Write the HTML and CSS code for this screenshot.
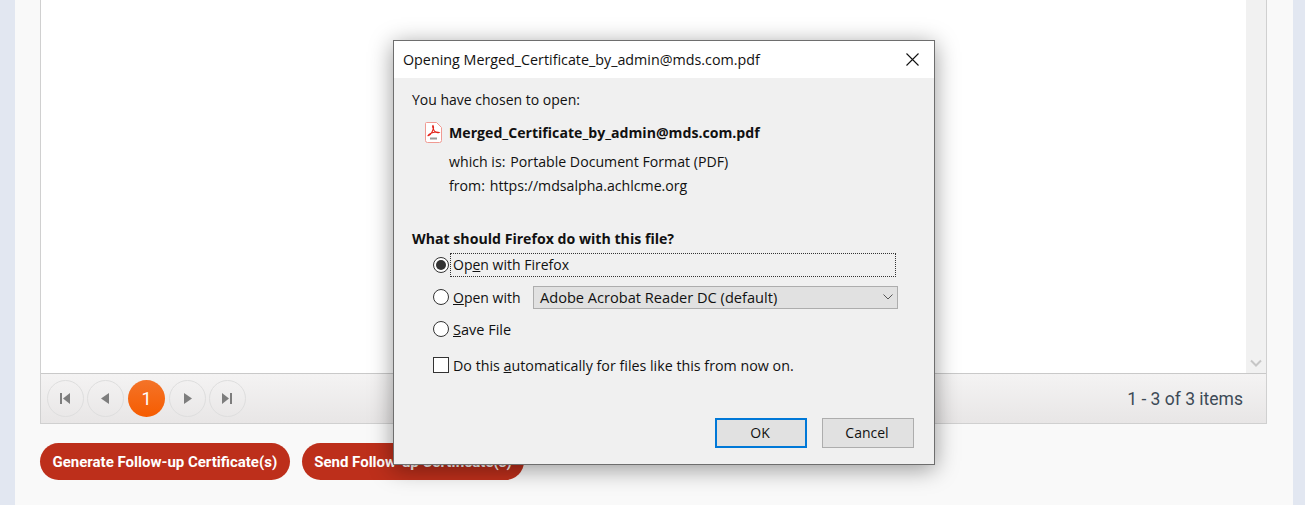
FILE: index.html
```html
<!DOCTYPE html>
<html lang="en">
<head>
    <meta charset="UTF-8">
    <meta name="viewport" content="width=device-width, initial-scale=1.0">
    <title>Certificates</title>
    <link rel="stylesheet" href="styles.css">
</head>
<body>

    <div class="panel">
        <div class="grid">
            <div class="grid-content">
                <div class="scrollbar">
                    <svg class="scroll-arrow" width="12" height="8" viewBox="0 0 12 8"><path d="M1 1.5L6 6.5L11 1.5" fill="none" stroke="#c6c6c6" stroke-width="2"/></svg>
                </div>
            </div>
            <div class="pager">
                <button class="page-btn"><svg class="nudge" width="10" height="11" viewBox="0 0 10 11"><path d="M0 0H2V11H0ZM10 0V11L3 5.5Z" fill="#7d7d7d"/></svg></button>
                <button class="page-btn"><svg class="nudge" width="8" height="11" viewBox="0 0 8 11"><path d="M8 0V11L0 5.5Z" fill="#7d7d7d"/></svg></button>
                <span class="page-current">1</span>
                <button class="page-btn"><svg width="8" height="11" viewBox="0 0 8 11"><path d="M0 0V11L8 5.5Z" fill="#7d7d7d"/></svg></button>
                <button class="page-btn"><svg class="nudge" width="10" height="11" viewBox="0 0 10 11"><path d="M0 0V11L7 5.5ZM8 0H10V11H8Z" fill="#7d7d7d"/></svg></button>
                <span class="page-info">1 - 3 of 3 items</span>
            </div>
        </div>
        <div class="actions">
            <button class="action-btn">Generate Follow-up Certificate(s)</button>
            <button class="action-btn">Send Follow-up Certificate(s)</button>
        </div>
    </div>

    <div class="dialog">
        <div class="dialog-title">
            <span>Opening Merged_Certificate_by_admin@mds.com.pdf</span>
            <svg class="dialog-close" width="13" height="13" viewBox="0 0 13 13"><path d="M0.5 0.5L12.5 12.5M12.5 0.5L0.5 12.5" stroke="#111" stroke-width="1.1"/></svg>
        </div>
        <div class="dialog-body">
            <div class="chosen">You have chosen to open:</div>
            <div class="file-row">
                <svg class="pdf-icon" width="17" height="21" viewBox="0 0 17 21">
                    <path d="M1.5 0.5H11.5L16.5 5.5V18.5Q16.5 20.5 14.5 20.5H2.5Q0.5 20.5 0.5 18.5V1.5Q0.5 0.5 1.5 0.5Z" fill="#fff" stroke="#f09a92"/>
                    <path d="M8 3.5C7 4.5 8.5 7.5 9.5 9C10.5 10.2 12.5 11 14 10.5C12.5 9.8 9.5 10 6.5 11C5 11.6 3.2 12.8 3 13.6C4.5 13.8 6.5 11 7.5 9C8.2 7.6 9 5 8 3.5Z" fill="none" stroke="#e2231a" stroke-width="1.1"/>
                    <rect x="5" y="15.5" width="7" height="2" fill="#9a9a9a"/>
                </svg>
                <strong>Merged_Certificate_by_admin@mds.com.pdf</strong>
            </div>
            <div class="meta-row which"><span>which is:</span><span>Portable Document Format (PDF)</span></div>
            <div class="meta-row from"><span>from:</span><span>https://mdsalpha.achlcme.org</span></div>

            <div class="question">What should Firefox do with this file?</div>
            <div class="options">
                <div class="option first">
                    <span class="radio checked"></span>
                    <span class="focus-label">Op<u>e</u>n with Firefox</span>
                </div>
                <div class="option second">
                    <span class="radio"></span>
                    <span class="open-label"><u>O</u>pen with</span>
                    <div class="select">
                        <span>Adobe Acrobat Reader DC (default)</span>
                        <svg width="10" height="6" viewBox="0 0 10 6"><path d="M0.5 0.5L5 5L9.5 0.5" fill="none" stroke="#555"/></svg>
                    </div>
                </div>
                <div class="option third">
                    <span class="radio"></span>
                    <span class="save-label"><u>S</u>ave File</span>
                </div>
                <div class="option fourth">
                    <span class="checkbox"></span>
                    <span class="auto-label">Do this <u>a</u>utomatically for files like this from now on.</span>
                </div>
            </div>
            <div class="dialog-buttons">
                <button class="win-btn default">OK</button>
                <button class="win-btn">Cancel</button>
            </div>
        </div>
    </div>

</body>
</html>
```

FILE: styles.css
```css
html, body {
    height: 100%;
}
body {
    margin: 0;
    background: #e2e7f1;
    overflow: hidden;
    font-family: 'Roboto', sans-serif;
}
.panel {
    margin: 0 12px 0 15px;
    height: 505px;
    padding: 0 26px 0 25px;
    background: #f9f9f9;
}
.grid {
    height: 424px;
    display: flex;
    flex-direction: column;
    border: 1px solid #d0d0d0;
    border-top: 0;
    box-sizing: border-box;
}
.grid-content {
    flex: 1;
    display: flex;
    justify-content: flex-end;
    background: white;
}
.scrollbar {
    width: 20px;
    background: #f1f1f1;
    display: flex;
    flex-direction: column;
    justify-content: flex-end;
    align-items: center;
    padding-bottom: 6px;
    box-sizing: border-box;
}
.pager {
    height: 49px;
    display: flex;
    align-items: center;
    gap: 3px;
    padding: 0 23px 0 6px;
    border-top: 1px solid #c9c9c9;
    background: linear-gradient(#f4f3f3, #e8e6e6);
}
.page-btn {
    width: 37px;
    height: 37px;
    padding: 0;
    display: flex;
    align-items: center;
    justify-content: center;
    border: 1px solid #dedede;
    border-radius: 50%;
    background: transparent;
}
.nudge {
    margin-right: 2px;
}
.page-current {
    width: 37px;
    height: 37px;
    margin: 0 1px;
    display: flex;
    align-items: center;
    justify-content: center;
    border-radius: 50%;
    background: linear-gradient(#f47328, #f65c00);
    color: white;
    font-size: 18px;
}
.page-info {
    margin-left: auto;
    font-size: 17.5px;
    color: #3d4a56;
}
.actions {
    display: flex;
    gap: 12px;
    margin-top: 19px;
}
.action-btn {
    height: 37px;
    padding: 1px 12.5px 0;
    border: 0;
    border-radius: 19px;
    background: #bd2f1b;
    color: white;
    font-family: 'Roboto', sans-serif;
    font-size: 15px;
    font-weight: bold;
}

/* browser dialog on top of the page */
.dialog {
    position: absolute;
    left: 393px;
    top: 40px;
    width: 542px;
    height: 425px;
    box-sizing: border-box;
    border: 1px solid #6e6e6e;
    background: #f0f0f0;
    color: #111;
    font-family: 'Open Sans', sans-serif;
    font-size: 14px;
    box-shadow: 0 4px 22px rgba(0, 0, 0, 0.4);
}
.dialog-title {
    height: 37px;
    display: flex;
    align-items: center;
    justify-content: space-between;
    padding: 0 15px 0 9px;
    background: white;
    font-size: 14.3px;
}
.dialog-body {
    padding: 12px 20px 0 18px;
}
.chosen {
    line-height: 20px;
}
.file-row {
    display: flex;
    align-items: center;
    gap: 7px;
    margin: 10px 0 0 13px;
    height: 24px;
    font-size: 14.14px;
}
.meta-row {
    display: flex;
    gap: 5px;
    margin-left: 37px;
    line-height: 20px;
    font-size: 14.15px;
}
.which {
    margin-top: 8px;
}
.from {
    margin-top: 4px;
}
.question {
    margin-top: 33px;
    font-weight: bold;
    line-height: 20px;
    font-size: 14.15px;
}
.options {
    margin: 3px 16px 0 21px;
}
.option {
    display: flex;
    align-items: center;
    gap: 4px;
}
.first {
    height: 26px;
}
.second {
    margin-top: 6px;
    height: 26px;
}
.third {
    margin-top: 6px;
    height: 26px;
}
.fourth {
    margin-top: 10px;
    height: 26px;
}
.radio {
    position: relative;
    width: 16px;
    height: 16px;
    box-sizing: border-box;
    border: 1px solid #333;
    border-radius: 50%;
    background: white;
    flex: none;
}
.radio.checked::after {
    content: "";
    position: absolute;
    left: 2px;
    top: 2px;
    width: 10px;
    height: 10px;
    border-radius: 50%;
    background: #333;
}
.checkbox {
    width: 14px;
    height: 14px;
    border: 1px solid #333;
    background: white;
    flex: none;
}
.auto-label {
    font-size: 14.28px;
}
.save-label {
    font-size: 14.5px;
}
.focus-label {
    flex: 1;
    line-height: 22px;
    border: 1px dotted #333;
    margin: 0 2px 0 -3px;
    padding-left: 2px;
}
.open-label {
    width: 76px;
}
.select {
    flex: 1;
    height: 21px;
    display: flex;
    align-items: center;
    justify-content: space-between;
    padding: 0 4px 0 6px;
    border: 1px solid #adadad;
    background: #e1e1e1;
    font-size: 14.6px;
}
.dialog-buttons {
    display: flex;
    justify-content: flex-end;
    gap: 15px;
    margin-top: 40px;
}
.win-btn {
    width: 92px;
    height: 30px;
    padding: 0 2px 2px 0;
    border: 1px solid #adadad;
    background: #e1e1e1;
    color: #111;
    font-family: 'Open Sans', sans-serif;
    font-size: 14px;
}
.win-btn.default {
    border: 2px solid #0078d7;
}
```
